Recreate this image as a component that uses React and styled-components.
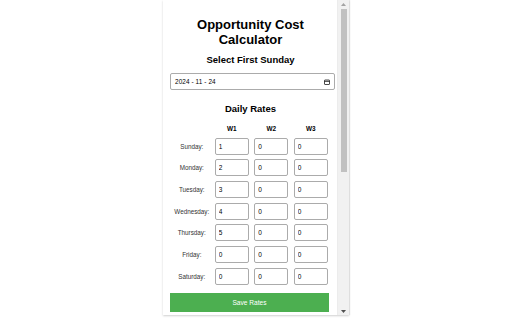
import { Fragment } from 'react';
import styled, { createGlobalStyle } from 'styled-components';

const GlobalStyle = createGlobalStyle`
  html, body {
    margin: 0;
    padding: 0;
    background: #ffffff;
    font-family: "Liberation Sans", Arial, sans-serif;
  }
`;

const Page = styled.div`
  width: 512px;
  height: 320px;
  display: flex;
  padding-left: 163px;
  box-sizing: border-box;
`;

const Popup = styled.div`
  width: 186px;
  height: 315px;
  display: flex;
  background: #fff;
  box-shadow: 0 1px 2px rgba(0, 0, 0, 0.18), 1px 0 1px rgba(0, 0, 0, 0.08);
  overflow: hidden;
`;

const Content = styled.div`
  flex: 1;
  padding: 0 6px 0 7px;
  display: flex;
  flex-direction: column;
  overflow: hidden;
`;

const Title = styled.h1`
  margin: 17px 0 0;
  font-size: 13px;
  line-height: 15px;
  font-weight: bold;
  text-align: center;
  color: #000;
`;

const SubTitle = styled.h3`
  margin: ${(p) => p.$top}px 0 0;
  font-size: 9.5px;
  line-height: 11px;
  font-weight: bold;
  text-align: center;
  color: #000;
`;

const DateField = styled.div`
  margin-top: 8px;
  height: 17px;
  width: 165px;
  box-sizing: border-box;
  border: 1px solid #ababab;
  border-radius: 2px;
  display: flex;
  align-items: center;
  justify-content: space-between;
  padding: 0 4px 0 4px;
  font-size: 6.4px;
  color: #000;
  letter-spacing: 0.1px;
`;

const RatesGrid = styled.div`
  margin-top: 10px;
  display: grid;
  grid-template-columns: 35px 34px 34px 34px;
  grid-template-rows: 9px;
  grid-auto-rows: 17px;
  column-gap: 5.5px;
  row-gap: 4.67px;
  justify-content: center;
  align-items: center;
  padding-left: 1px;
`;

const HeadCell = styled.div`
  font-size: 6.4px;
  font-weight: bold;
  text-align: center;
  color: #000;
`;

const DayLabel = styled.div`
  font-size: 6.3px;
  text-align: center;
  color: #333;
`;

const RateInput = styled.input`
  width: 34px;
  height: 17px;
  box-sizing: border-box;
  border: 1px solid #ababab;
  border-radius: 2px;
  padding: 0 3px;
  margin: 0;
  font-family: "Liberation Sans", Arial, sans-serif;
  font-size: 6.5px;
  color: #000;
  background: #fff;
  outline: none;
`;

const SaveButton = styled.button`
  margin-top: 8px;
  width: 159px;
  height: 19px;
  flex-shrink: 0;
  border: none;
  border-radius: 0;
  background: #4caf50;
  color: #fff;
  font-family: "Liberation Sans", Arial, sans-serif;
  font-size: 6.6px;
  padding: 0;
`;

const Scrollbar = styled.div`
  width: 11px;
  background: #f1f1f1;
  display: flex;
  flex-direction: column;
  align-items: center;
  border-left: 1px solid #ececec;
`;

const Arrow = styled.div`
  height: 8px;
  width: 100%;
  display: flex;
  align-items: center;
  justify-content: center;
  flex-shrink: 0;
`;

const Track = styled.div`
  flex: 1;
  width: 100%;
  display: flex;
  justify-content: center;
  padding-top: 1px;
`;

const Thumb = styled.div`
  width: 6px;
  height: 163px;
  background: #c1c1c1;
`;

const days = [
  ['Sunday', '1'],
  ['Monday', '2'],
  ['Tuesday', '3'],
  ['Wednesday', '4'],
  ['Thursday', '5'],
  ['Friday', '0'],
  ['Saturday', '0'],
];

function CalendarIcon() {
  return (
    <svg width="6" height="6" viewBox="0 0 12 12" fill="none">
      <rect x="1" y="2" width="10" height="9" rx="1" stroke="#000" strokeWidth="1.4" />
      <line x1="1" y1="4.6" x2="11" y2="4.6" stroke="#000" strokeWidth="1.6" />
    </svg>
  );
}

function App() {
  return (
    <Page>
      <GlobalStyle />
      <Popup>
        <Content>
          <Title>
            Opportunity Cost
            <br />
            Calculator
          </Title>
          <SubTitle $top={7}>Select First Sunday</SubTitle>
          <DateField>
            <span>2024 - 11 - 24</span>
            <CalendarIcon />
          </DateField>
          <SubTitle $top={13}>Daily Rates</SubTitle>
          <RatesGrid>
            <div />
            <HeadCell>W1</HeadCell>
            <HeadCell>W2</HeadCell>
            <HeadCell>W3</HeadCell>
            {days.map(([day, first]) => (
              <Fragment key={day}>
                <DayLabel>{day}:</DayLabel>
                <RateInput defaultValue={first} />
                <RateInput defaultValue="0" />
                <RateInput defaultValue="0" />
              </Fragment>
            ))}
          </RatesGrid>
          <SaveButton>Save Rates</SaveButton>
        </Content>
        <Scrollbar>
          <Arrow>
            <svg width="5" height="3" viewBox="0 0 5 3">
              <polygon points="0,3 5,3 2.5,0" fill="#a3a3a3" />
            </svg>
          </Arrow>
          <Track>
            <Thumb />
          </Track>
          <Arrow>
            <svg width="5" height="3" viewBox="0 0 5 3">
              <polygon points="0,0 5,0 2.5,3" fill="#505050" />
            </svg>
          </Arrow>
        </Scrollbar>
      </Popup>
    </Page>
  );
}

export default App;
